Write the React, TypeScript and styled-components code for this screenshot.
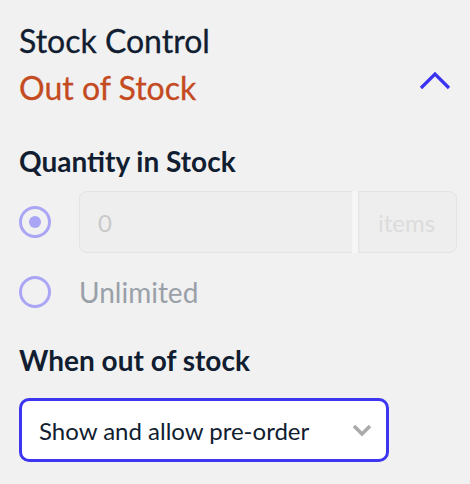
import React from 'react';
import styled, {createGlobalStyle} from 'styled-components';

const Global = createGlobalStyle`
  body {
    margin: 0;
    background: #f1f1f1;
    font-family: Lato, "Open Sans", sans-serif;
    color: #111d30;
  }
`
const Panel = styled.div`
  padding: 17px 19px 0 19px;
  width: 470px;
  box-sizing: border-box;
`
const Header = styled.div`
  display: flex;
  justify-content: space-between;
  align-items: flex-end;
`
const Title = styled.div`
  font-size: 32px;
  line-height: 47px;
  -webkit-text-stroke: 0.3px currentColor;
`
const Status = styled(Title)`
  color: #c44a1f;
`
const Toggle = styled.svg`
  width: 32px;
  height: 20px;
  margin: 0 0 21px 0;
`
const Label = styled.div<{gap: number}>`
  font-size: 28px;
  line-height: 40px;
  font-weight: 700;
  margin-top: ${p => p.gap}px;
`
const Row = styled.div<{gap: number}>`
  display: flex;
  align-items: center;
  gap: 28px;
  margin-top: ${p => p.gap}px;
`
const Radio = styled.span<{checked?: boolean}>`
  width: 32px;
  height: 32px;
  box-sizing: border-box;
  border: 3.5px solid #aaa5f4;
  border-radius: 50%;
  display: flex;
  align-items: center;
  justify-content: center;
  flex-shrink: 0;
  &::after {
    content: '';
    width: 12px;
    height: 12px;
    border-radius: 50%;
    background: ${p => (p.checked ? '#aaa5f4' : 'transparent')};
  }
`
const InputGroup = styled.div`
  display: flex;
  flex-shrink: 0;
  width: 378px;
  height: 62px;
`
const Field = styled.div`
  flex: 1;
  box-sizing: border-box;
  border: 1.5px solid #e4e4e4;
  border-right: none;
  border-radius: 8px 0 0 8px;
  background: #eeeeee;
  display: flex;
  align-items: center;
  padding-left: 18px;
  font-size: 24px;
  color: #c9c9c9;
`
const Divider = styled.div`
  width: 6px;
  background: #f6f6f6;
`
const Addon = styled.div`
  width: 99px;
  box-sizing: border-box;
  border: 1.5px solid #e4e4e4;
  border-left: none;
  border-radius: 0 8px 8px 0;
  background: #eeeeee;
  display: flex;
  align-items: center;
  padding-left: 20px;
  font-size: 24px;
  color: #dcdcdc;
  box-shadow: inset 2px 0 0 -0.5px #e6e6e6;
`
const OptionText = styled.span`
  font-size: 28px;
  line-height: 32px;
  color: #99a0a8;
`
const Select = styled.div`
  margin-top: 18px;
  width: 370px;
  height: 64px;
  box-sizing: border-box;
  border: 3px solid #3d35f0;
  border-radius: 10px;
  background: #fff;
  display: flex;
  align-items: center;
  justify-content: space-between;
  padding: 0 14px 0 17px;
  font-size: 24px;
  color: #111d30;
`
const Caret = styled.svg`
  width: 20px;
  height: 14px;
`

function App() {
  return (
    <Panel>
      <Global/>
      <Header>
        <div>
          <Title>Stock Control</Title>
          <Status>Out of Stock</Status>
        </div>
        <Toggle viewBox="0 0 32 20">
          <path d="M2 18 L16 4 L30 18" fill="none" stroke="#3b33f2" strokeWidth="3.2"/>
        </Toggle>
      </Header>
      <Label gap={30}>Quantity in Stock</Label>
      <Row gap={10}>
        <Radio checked/>
        <InputGroup>
          <Field>0</Field>
          <Divider/>
          <Addon>items</Addon>
        </InputGroup>
      </Row>
      <Row gap={23}>
        <Radio/>
        <OptionText>Unlimited</OptionText>
      </Row>
      <Label gap={32}>When out of stock</Label>
      <Select>
        <span>Show and allow pre-order</span>
        <Caret viewBox="0 0 20 14">
          <path d="M2 3 L10 11 L18 3" fill="none" stroke="#aaaaaa" strokeWidth="3.5"/>
        </Caret>
      </Select>
    </Panel>
  );
}
export default App
